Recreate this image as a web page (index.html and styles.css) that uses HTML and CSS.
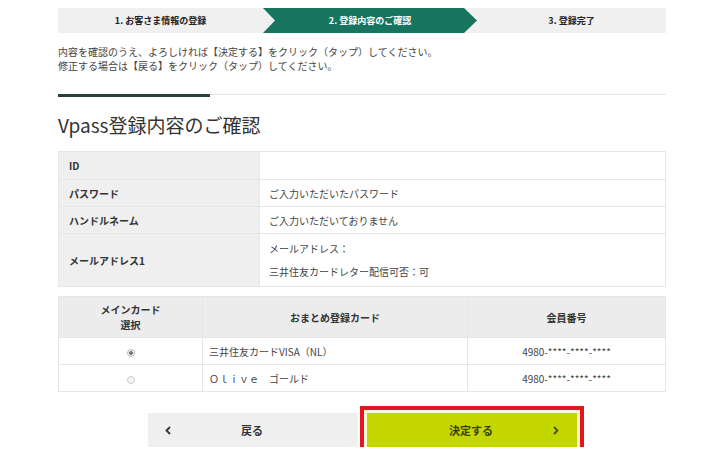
FILE: index.html
```html
<!DOCTYPE html>
<html lang="ja">
<head>
<meta charset="utf-8">
<title>Vpass登録内容のご確認</title>
<link rel="stylesheet" href="styles.css">
</head>
<body>
<div class="page">
  <ol class="steps">
    <li class="step step-1">1. お客さま情報の登録</li>
    <li class="step step-2 current">2. 登録内容のご確認</li>
    <li class="step step-3">3. 登録完了</li>
  </ol>

  <div class="lead">
    <p class="lead-line">内容を確認のうえ、よろしければ【決定する】をクリック（タップ）してください。</p>
    <p class="lead-line">修正する場合は【戻る】をクリック（タップ）してください。</p>
  </div>

  <div class="rule"><span class="rule-accent"></span><span class="rule-line"></span></div>

  <h1 class="title">Vpass登録内容のご確認</h1>

  <table class="info">
    <tr class="row-id"><th>ID</th><td></td></tr>
    <tr><th>パスワード</th><td>ご入力いただいたパスワード</td></tr>
    <tr><th>ハンドルネーム</th><td>ご入力いただいておりません</td></tr>
    <tr class="row-mail"><th>メールアドレス1</th><td><div class="line">メールアドレス：</div><div class="line">三井住友カードレター配信可否：可</div></td></tr>
  </table>

  <table class="cards">
    <thead>
      <tr><th class="c-main">メインカード<br>選択</th><th class="c-name">おまとめ登録カード</th><th class="c-num">会員番号</th></tr>
    </thead>
    <tbody>
      <tr><td class="c-main"><span class="radio checked"></span></td><td class="c-name">三井住友カードVISA（NL）</td><td class="c-num">4980-****-****-****</td></tr>
      <tr><td class="c-main"><span class="radio"></span></td><td class="c-name">Ｏｌｉｖｅ　ゴールド</td><td class="c-num">4980-****-****-****</td></tr>
    </tbody>
  </table>

  <div class="actions">
    <a class="btn btn-back" href="#">
      <span class="chev chev-left"><svg width="6" height="9" viewBox="0 0 6 9"><polyline points="5,1 1.5,4.5 5,8" fill="none" stroke="#333" stroke-width="1.8"/></svg></span>
      <span class="btn-label">戻る</span>
      <span class="chev"></span>
    </a>
    <a class="btn btn-next" href="#">
      <span class="chev"></span>
      <span class="btn-label">決定する</span>
      <span class="chev chev-right"><svg width="6" height="9" viewBox="0 0 6 9"><polyline points="1,1 4.5,4.5 1,8" fill="none" stroke="#4a5000" stroke-width="1.8"/></svg></span>
    </a>
  </div>
</div>
</body>
</html>
```

FILE: styles.css
```css
html, body {
  margin: 0;
  padding: 0;
  background: #ffffff;
}

body {
  font-family: "Noto Sans CJK JP", "Noto Sans", "Liberation Sans", sans-serif;
  color: #333333;
}

.page {
  width: 608px;
  margin-left: 58px;
  padding-top: 8px;
}

/* steps */
.steps {
  display: flex;
  list-style: none;
  margin: 0;
  padding: 0;
  height: 25px;
  background: #f0f0f0;
}

.step {
  display: flex;
  align-items: center;
  justify-content: center;
  font-size: 9px;
  font-weight: 700;
  color: #222222;
  height: 25px;
}

.step-1 { width: 205px; }
.step-2 { width: 214px; }
.step-3 { flex: 1; }

.step.current {
  background: #17755f;
  color: #ffffff;
  clip-path: polygon(0 0, calc(100% - 13px) 0, 100% 50%, calc(100% - 13px) 100%, 0 100%, 12px 50%);
}

/* lead */
.lead {
  margin-top: 12px;
  display: flex;
  flex-direction: column;
}

.lead-line {
  margin: 0;
  font-size: 10px;
  line-height: 14px;
  height: 14px;
  color: #444444;
}

.rule {
  display: flex;
  align-items: flex-start;
  margin-top: 21px;
  height: 3px;
}

.rule-accent {
  width: 152px;
  height: 3px;
  background: #27443a;
}

.rule-line {
  flex: 1;
  height: 1px;
  background: #e2e2e2;
}

.title {
  margin: 15px 0 13px;
  font-size: 19px;
  line-height: 26px;
  font-weight: 400;
  color: #333333;
}

/* info table */
.info {
  width: 608px;
  border-collapse: collapse;
  font-size: 10px;
}

.info th, .info td {
  border: 1px solid #e6e6e6;
  height: 26px;
  padding: 0;
  vertical-align: middle;
  text-align: left;
}

.info th {
  width: 190px;
  padding-left: 10px;
  background: #efefef;
  font-weight: 700;
  color: #333333;
}

.info td {
  padding-left: 9px;
  color: #444444;
}

.info .row-id th,
.info .row-id td {
  height: 27px;
}

.info .row-mail th,
.info .row-mail td {
  height: 52px;
}

.info .line {
  line-height: 23px;
}

/* cards table */
.cards {
  width: 608px;
  margin-top: 9px;
  border-collapse: collapse;
  font-size: 10px;
}

.cards th, .cards td {
  box-sizing: border-box;
  border: 1px solid #e6e6e6;
  padding: 0;
  vertical-align: middle;
}

.cards th {
  background: #ececec;
  font-weight: 700;
  color: #333333;
  height: 41px;
  line-height: 15px;
  text-align: center;
}

.cards td {
  height: 27px;
  color: #444444;
}

.cards .c-main { width: 144px; text-align: center; }
.cards .c-name { width: 265px; }
.cards td.c-name { padding-left: 6px; text-align: left; }
.cards .c-num { text-align: center; }

.radio {
  display: inline-block;
  width: 6px;
  height: 6px;
  border-radius: 50%;
  border: 1px solid #cccccc;
  background: #f4f4f4;
  vertical-align: middle;
}

.radio.checked {
  border-color: #bbbbbb;
  background: radial-gradient(circle, #777777 0 1.6px, #f0f0f0 2px);
}

/* buttons */
.actions {
  display: flex;
  justify-content: center;
  gap: 9px;
  margin-top: 21px;
}

.btn {
  display: grid;
  grid-template-columns: 1fr auto 1fr;
  align-items: center;
  width: 210px;
  height: 34px;
  box-sizing: border-box;
  text-decoration: none;
  font-size: 11px;
  font-weight: 700;
  color: #333333;
  padding: 0 18px 0 17px;
}

.btn-back {
  background: #efefef;
}

.btn-next {
  background: #c4d600;
  color: #3a3f00;
  box-shadow: 0 0 0 3px #fbf7d6, 0 0 0 7px #e3151d;
}

.chev {
  display: flex;
  align-items: center;
}

.chev-right {
  justify-content: flex-end;
}

.btn-label {
  text-align: center;
}
```
